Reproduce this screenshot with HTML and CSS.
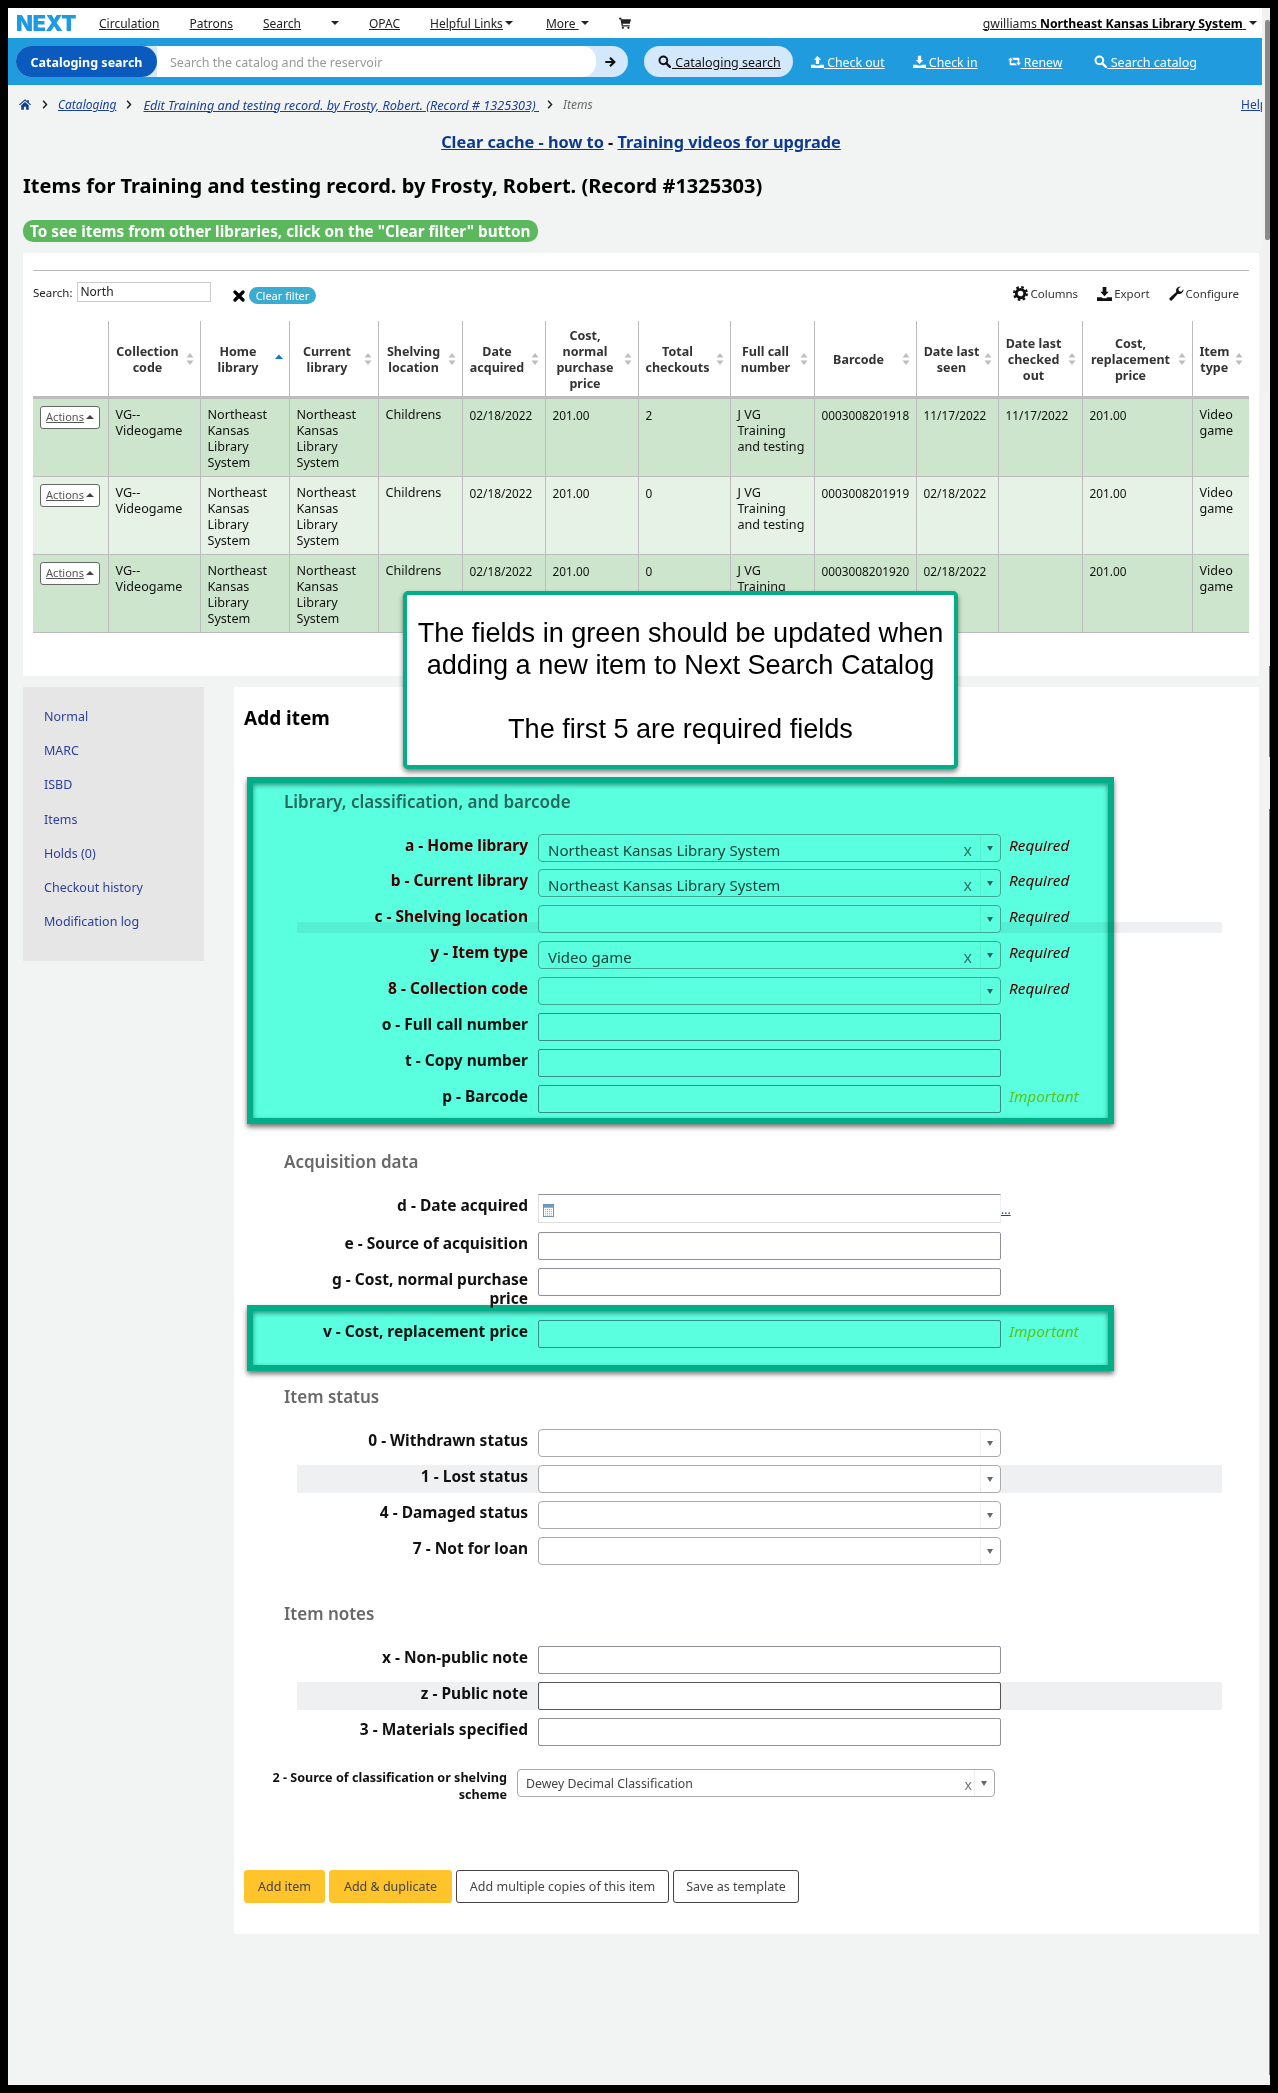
FILE: index.html
```html
<!DOCTYPE html>
<html lang="en">
<head>
<meta charset="utf-8">
<title>Items for Training and testing record</title>
<link rel="stylesheet" href="styles.css">
</head>
<body>
<svg class="defs" aria-hidden="true">
  <symbol id="i-search" viewBox="0 0 16 16"><circle cx="6.6" cy="6.6" r="4.8" fill="none" stroke="currentColor" stroke-width="2.4"/><path d="M10 10l4.6 4.6" stroke="currentColor" stroke-width="2.8" stroke-linecap="round"/></symbol>
  <symbol id="i-up" viewBox="0 0 16 16"><path d="M8 1l4.5 5H10v5H6V6H3.500zM0 12h5v1h6v-1h5v4H0z" fill="currentColor"/></symbol>
  <symbol id="i-down" viewBox="0 0 16 16"><path d="M6 1h4v5h2.500L8 11 3.500 6H6zM0 12h5l1 1h4l1-1h5v4H0z" fill="currentColor"/></symbol>
  <symbol id="i-retweet" viewBox="0 0 16 12"><path d="M3 1l3 3.500H4V8h5l2 2.500H3a1 1 0 0 1-1-1v-5H0zM5 1.500h8a1 1 0 0 1 1 1v5h2L13 11 10 7.500h2V4H7z" fill="currentColor"/></symbol>
  <symbol id="i-home" viewBox="0 0 16 14"><path d="M8 0l3 2.600V1h2v3.300L16 7l-1 1-7-6-7 6-1-1zM3 8l5-4.300L13 8v6H9.500v-4h-3v4H3z" fill="currentColor"/></symbol>
  <symbol id="i-chev" viewBox="0 0 8 12"><path d="M1.500 1L6 6l-4.500 5" fill="none" stroke="currentColor" stroke-width="2"/></symbol>
  <symbol id="i-cart" viewBox="0 0 14 14"><path d="M0 1h2.600l.4 1.500h11L12.600 8H4.300l.3 1.500H12.500V11H3.300L1.600 2.500H0z" fill="currentColor"/><circle cx="4.500" cy="12.600" r="1.300" fill="currentColor"/><circle cx="11" cy="12.600" r="1.300" fill="currentColor"/></symbol>
  <symbol id="i-arrow" viewBox="0 0 14 14"><path d="M1.500 7h9M7 2l5 5-5 5" fill="none" stroke="currentColor" stroke-width="2.600"/></symbol>
  <symbol id="i-times" viewBox="0 0 12 12"><path d="M2 2l8 8M10 2l-8 8" stroke="currentColor" stroke-width="3.200" stroke-linecap="round"/></symbol>
  <symbol id="i-cog" viewBox="0 0 16 16"><circle cx="8" cy="8" r="4.500" fill="none" stroke="currentColor" stroke-width="3"/><circle cx="8" cy="8" r="6.800" fill="none" stroke="currentColor" stroke-width="2.400" stroke-dasharray="2.700 2.640"/></symbol>
  <symbol id="i-wrench" viewBox="0 0 16 16"><path d="M15.500 3.500a4.500 4.500 0 0 1-6 4.700L3.500 15a1.700 1.700 0 0 1-2.500-2.500l6.800-6a4.500 4.500 0 0 1 4.700-6L10 3l.6 2.400L13 6z" fill="currentColor"/></symbol>
  <symbol id="i-cal" viewBox="0 0 12 14"><rect x=".5" y=".5" width="11" height="13" fill="#fff" stroke="#5f8ab5"/><rect x="1" y="1" width="10" height="3" fill="#6f9ac6"/><path d="M2.500 6h7M2.500 8h7M2.500 10h7M2.500 12h7" stroke="#7d8fa3" stroke-dasharray="1 1"/></symbol>
  <symbol id="i-sort" viewBox="0 0 8 12"><path d="M4 0l3.500 4.500h-7zM4 12L.5 7.500h7z" fill="#bdbdbd"/></symbol>
  <symbol id="i-sortup" viewBox="0 0 8 12"><path d="M4 1.500L8 6H0z" fill="#0b78c9"/></symbol>
</svg>

<div class="frame">
  <div class="page">
    <nav class="topnav">
      <span class="logo">NEXT</span>
      <a class="navlink">Circulation</a>
      <a class="navlink">Patrons</a>
      <a class="navlink">Search</a>
      <i class="caret"></i>
      <a class="navlink">OPAC</a>
      <span class="navgroup"><a class="navlink">Helpful Links</a><i class="caret"></i></span>
      <span class="navgroup wide"><a class="navlink">More&nbsp;</a><i class="caret"></i></span>
      <svg class="ico-cart"><use href="#i-cart"/></svg>
      <span class="user"><a class="navlink">gwilliams <b>Northeast Kansas Library System</b>&nbsp;</a><i class="caret"></i></span>
    </nav>

    <div class="searchbar">
      <div class="search">
        <span class="search-tag">Cataloging search</span>
        <span class="search-input">Search the catalog and the reservoir</span>
        <svg class="ico-go"><use href="#i-arrow"/></svg>
      </div>
      <a class="tab tab-on"><svg class="ico-tab"><use href="#i-search"/></svg><span class="tab-u">&nbsp;Cataloging search</span></a>
      <a class="tab tab-out"><svg class="ico-tab"><use href="#i-up"/></svg><span class="tab-u">&nbsp;Check out</span></a>
      <a class="tab tab-in"><svg class="ico-tab"><use href="#i-down"/></svg><span class="tab-u">&nbsp;Check in</span></a>
      <a class="tab tab-renew"><svg class="ico-tab"><use href="#i-retweet"/></svg><span class="tab-u">&nbsp;Renew</span></a>
      <a class="tab tab-last"><svg class="ico-tab"><use href="#i-search"/></svg><span class="tab-u">&nbsp;Search catalog</span></a>
    </div>

    <div class="crumbs">
      <svg class="ico-home"><use href="#i-home"/></svg>
      <svg class="ico-chev"><use href="#i-chev"/></svg>
      <a class="crumb">Cataloging</a>
      <svg class="ico-chev"><use href="#i-chev"/></svg>
      <a class="crumb crumb-long">Edit Training and testing record. by Frosty, Robert. (Record # 1325303)&nbsp;</a>
      <svg class="ico-chev"><use href="#i-chev"/></svg>
      <span class="crumb-last">Items</span>
      <a class="help">Help</a>
    </div>

    <p class="notice"><a>Clear cache - how to</a> - <a>Training videos for upgrade</a></p>
    <h1 class="title">Items for Training and testing record. by Frosty, Robert. (Record #1325303)</h1>
    <div class="badge">To see items from other libraries, click on the "Clear filter" button</div>

    <section class="card">
      <div class="rule"></div>
      <div class="toolbar">
        <label class="filter">Search: <span class="filter-box">North</span></label>
        <svg class="ico-x"><use href="#i-times"/></svg>
        <span class="clear">Clear filter</span>
        <span class="tools">
          <span class="tool"><svg class="ico-tool"><use href="#i-cog"/></svg>Columns</span>
          <span class="tool"><svg class="ico-tool"><use href="#i-down"/></svg>Export</span>
          <span class="tool"><svg class="ico-tool"><use href="#i-wrench"/></svg>Configure</span>
        </span>
      </div>
      <table class="items">
        <colgroup>
          <col class="c1"><col class="c2"><col class="c3"><col class="c3"><col class="c5"><col class="c6"><col class="c7"><col class="c2"><col class="c9"><col class="c10"><col class="c11"><col class="c12"><col class="c13"><col class="c14">
        </colgroup>
        <thead>
          <tr>
            <th></th>
            <th>Collection code<svg class="sort"><use href="#i-sort"/></svg></th>
            <th>Home library<svg class="sort"><use href="#i-sortup"/></svg></th>
            <th>Current library<svg class="sort"><use href="#i-sort"/></svg></th>
            <th>Shelving location<svg class="sort"><use href="#i-sort"/></svg></th>
            <th>Date acquired<svg class="sort"><use href="#i-sort"/></svg></th>
            <th>Cost, normal purchase price<svg class="sort"><use href="#i-sort"/></svg></th>
            <th>Total checkouts<svg class="sort"><use href="#i-sort"/></svg></th>
            <th>Full call number<svg class="sort"><use href="#i-sort"/></svg></th>
            <th>Barcode<svg class="sort"><use href="#i-sort"/></svg></th>
            <th class="th-tight">Date last seen<svg class="sort"><use href="#i-sort"/></svg></th>
            <th>Date last checked out<svg class="sort"><use href="#i-sort"/></svg></th>
            <th>Cost, replacement price<svg class="sort"><use href="#i-sort"/></svg></th>
            <th>Item type<svg class="sort"><use href="#i-sort"/></svg></th>
          </tr>
        </thead>
        <tbody>
          <tr class="odd">
            <td><a class="actions"><span>Actions </span><i class="caret-up"></i></a></td>
            <td>VG-- Videogame</td><td>Northeast Kansas Library System</td><td>Northeast Kansas Library System</td><td>Childrens</td><td class="num">02/18/2022</td><td class="num">201.00</td><td class="num">2</td><td>J VG Training and testing</td><td class="num">0003008201918</td><td class="num">11/17/2022</td><td class="num">11/17/2022</td><td class="num">201.00</td><td>Video game</td>
          </tr>
          <tr class="even">
            <td><a class="actions"><span>Actions </span><i class="caret-up"></i></a></td>
            <td>VG-- Videogame</td><td>Northeast Kansas Library System</td><td>Northeast Kansas Library System</td><td>Childrens</td><td class="num">02/18/2022</td><td class="num">201.00</td><td class="num">0</td><td>J VG Training and testing</td><td class="num">0003008201919</td><td class="num">02/18/2022</td><td></td><td class="num">201.00</td><td>Video game</td>
          </tr>
          <tr class="odd">
            <td><a class="actions"><span>Actions </span><i class="caret-up"></i></a></td>
            <td>VG-- Videogame</td><td>Northeast Kansas Library System</td><td>Northeast Kansas Library System</td><td>Childrens</td><td class="num">02/18/2022</td><td class="num">201.00</td><td class="num">0</td><td>J VG Training and testing</td><td class="num">0003008201920</td><td class="num">02/18/2022</td><td></td><td class="num">201.00</td><td>Video game</td>
          </tr>
        </tbody>
      </table>
    </section>

    <div class="lower">
      <aside class="side">
        <a>Normal</a><a>MARC</a><a>ISBD</a><a>Items</a><a>Holds (0)</a><a>Checkout history</a><a>Modification log</a>
      </aside>

      <main class="form">
        <h2 class="form-title">Add item</h2>

        <section class="fields">
          <h3>Library, classification, and barcode</h3>
          <div class="row row-a"><label class="req">a - Home library</label><div class="sel"><span>Northeast Kansas Library System</span><u>x</u><i></i></div><em class="req">Required</em></div>
          <div class="row"><label class="req">b - Current library</label><div class="sel"><span>Northeast Kansas Library System</span><u>x</u><i></i></div><em class="req">Required</em></div>
          <div class="row row-band-short"><label class="req">c - Shelving location</label><div class="sel"><span></span><i></i></div><em class="req">Required</em></div>
          <div class="row"><label class="req">y - Item type</label><div class="sel"><span>Video game</span><u>x</u><i></i></div><em class="req">Required</em></div>
          <div class="row"><label class="req">8 - Collection code</label><div class="sel"><span></span><i></i></div><em class="req">Required</em></div>
          <div class="row"><label>o - Full call number</label><div class="inp"></div></div>
          <div class="row"><label>t - Copy number</label><div class="inp"></div></div>
          <div class="row"><label>p - Barcode</label><div class="inp"></div><em class="imp">Important</em></div>
        </section>

        <section class="fields">
          <h3>Acquisition data</h3>
          <div class="row row-date"><label>d - Date acquired</label><div class="inp inp-date"><svg class="ico-cal"><use href="#i-cal"/></svg></div><a class="dots">...</a></div>
          <div class="row"><label>e - Source of acquisition</label><div class="inp"></div></div>
          <div class="row row-wrap"><label>g - Cost, normal purchase price</label><div class="inp"></div></div>
          <div class="row"><label>v - Cost, replacement price</label><div class="inp"></div><em class="imp">Important</em></div>
        </section>

        <section class="fields">
          <h3>Item status</h3>
          <div class="row"><label>0 - Withdrawn status</label><div class="sel"><span></span><i></i></div></div>
          <div class="row row-band"><label>1 - Lost status</label><div class="sel"><span></span><i></i></div></div>
          <div class="row"><label>4 - Damaged status</label><div class="sel"><span></span><i></i></div></div>
          <div class="row"><label>7 - Not for loan</label><div class="sel"><span></span><i></i></div></div>
        </section>

        <section class="fields fields-notes">
          <h3>Item notes</h3>
          <div class="row"><label>x - Non-public note</label><div class="inp"></div></div>
          <div class="row row-band"><label>z - Public note</label><div class="inp inp-dark"></div></div>
          <div class="row"><label>3 - Materials specified</label><div class="inp"></div></div>
        </section>

        <div class="scheme">
          <label>2 - Source of classification or shelving scheme</label>
          <div class="sel sel-small"><span>Dewey Decimal Classification</span><u>x</u><i></i></div>
        </div>

        <div class="buttons">
          <a class="btn btn-y b1">Add item</a>
          <a class="btn btn-y b2">Add &amp; duplicate</a>
          <a class="btn b3">Add multiple copies of this item</a>
          <a class="btn b4">Save as template</a>
        </div>

        <div class="hl hl-main"></div>
        <div class="hl hl-cost"></div>
      </main>
    </div>
  </div>

  <div class="callout">The fields in green should be updated when adding a new item to Next Search Catalog<br><br>The first 5 are required fields</div>
  <div class="scrollbar"><div class="thumb"></div></div>
  <div class="edge edge-a"></div>
  <div class="edge edge-b"></div>
</div>
</body>
</html>
```
FILE: styles.css
```css
* { box-sizing: border-box; }
html, body { height: 100%; }
body {
  margin: 0;
  padding: 8px;
  background: #000;
  font-family: "Noto Sans", "Open Sans", sans-serif;
  font-size: 12.5px;
  color: #111;
  overflow: hidden;
}
.defs { position: absolute; width: 0; height: 0; }
a { color: inherit; }

.frame {
  position: relative;
  width: 1262px;
  height: 2077px;
  background: #f2f4f4;
  overflow: hidden;
}
.page { width: 1254px; }

/* top nav */
.topnav {
  height: 30px;
  background: #fff;
  display: flex;
  align-items: center;
  gap: 30px;
  padding: 0 5px 0 8px;
  font-size: 12px;
}
.logo {
  font-family: "Inter", "Noto Sans", sans-serif;
  font-weight: 900;
  font-size: 22px;
  letter-spacing: -.5px;
  color: #1e9be0;
  width: 61px;
  margin-right: -8px;
}
.navlink { text-decoration: underline; color: #222; white-space: nowrap; }
.navlink b { font-weight: 700; color: #000; }
.navgroup { display: flex; align-items: center; gap: 2px; }
.navgroup.wide { margin-left: 3px; }
.caret {
  width: 0; height: 0;
  border-left: 4px solid transparent;
  border-right: 4px solid transparent;
  border-top: 4px solid #222;
  display: block;
}
.ico-cart { width: 12px; height: 12px; color: #222; }
.user { margin-left: auto; display: flex; align-items: center; gap: 3px; font-size: 12.25px; }

/* search bar */
.searchbar {
  width: 1254px;
  height: 47px;
  background: #209bde;
  display: flex;
  align-items: center;
  padding-left: 8px;
  font-size: 12.5px;
}
.search {
  width: 612px;
  height: 31px;
  border-radius: 16px;
  background: #d3e8fb;
  display: flex;
  align-items: center;
  margin-right: 16px;
}
.search-tag {
  width: 141px;
  height: 31px;
  line-height: 33px;
  border-radius: 16px;
  background: #0a5bbd;
  color: #fff;
  font-weight: 700;
  text-align: center;
}
.search-input {
  width: 439px;
  height: 31px;
  line-height: 33px;
  background: #fff;
  color: #999;
  padding-left: 13px;
  border-radius: 0 14px 14px 0;
}
.ico-go { width: 12px; height: 12px; margin-left: 8px; color: #111; }
.tab {
  display: flex;
  align-items: center;
  height: 31px;
  color: #fff;
  margin-right: 29px;
  white-space: nowrap;
  font-size: 12.3px;
}
.tab-u { text-decoration: underline; padding-top: 2px; }
.tab-on {
  width: 149px;
  background: #d3e8fb;
  color: #111;
  border-radius: 16px;
  padding-left: 14px;
  margin-right: 18px;
  font-size: 12.5px;
}
.tab-on .tab-u { margin-left: 1px; }
.tab-out { margin-right: 28px; }
.tab-in { margin-right: 30px; }
.tab-renew { margin-right: 32px; }
.tab-last { font-size: 12.6px; }
.ico-tab { width: 13px; height: 13px; }

/* breadcrumbs */
.crumbs {
  height: 39px;
  display: flex;
  align-items: center;
  padding-left: 11px;
  font-size: 12px;
  font-style: italic;
  position: relative;
}
.ico-home { width: 12px; height: 11px; color: #0f3d8f; margin-right: 11px; }
.ico-chev { width: 6px; height: 9px; color: #222; margin-right: 10px; }
.crumb { color: #1a3f99; text-decoration: underline; white-space: nowrap; margin-right: 10px; }
.crumb-long { font-size: 12.66px; margin-left: 1px; margin-right: 8px; }
.crumb-last { color: #666; }
.help {
  margin-left: auto;
  font-style: normal;
  text-decoration: underline;
  color: #1a3f99;
  width: 21px;
  overflow: hidden;
}

.notice {
  margin: 7px 0 0;
  height: 22px;
  line-height: 22px;
  text-align: center;
  font-size: 16.3px;
  font-weight: 700;
  padding-left: 12px;
}
.notice a { color: #0c3a8f; text-decoration: underline; }
.title {
  margin: 18px 0 0 15px;
  height: 30px;
  line-height: 30px;
  font-size: 20px;
  font-weight: 700;
  color: #000;
}
.badge {
  margin: 19px 0 0 15px;
  width: 515px;
  height: 22px;
  line-height: 22px;
  border-radius: 10px;
  background: #5cb85c;
  color: #fff;
  font-weight: 700;
  font-size: 15.3px;
  padding-left: 7px;
  white-space: nowrap;
}

/* item table card */
.card {
  margin: 11px 3px 0 15px;
  height: 423px;
  background: #fff;
  padding: 17px 10px 0;
}
.rule { height: 1px; background: #bbb; }
.toolbar {
  height: 50px;
  display: flex;
  align-items: center;
  padding-bottom: 5px;
  font-size: 12px;
}
.filter { display: flex; align-items: center; gap: 5px; width: 198px; color: #222; font-size: 11.5px; margin-bottom: 3px; margin-right: 2px; }
.filter-box {
  width: 134px;
  height: 20px;
  line-height: 18px;
  border: 1px solid #ccc;
  padding-left: 2px;
  color: #222;
  font-size: 12px;
}
.ico-x { width: 12px; height: 12px; color: #000; margin-right: 4px; margin-top: 4px; }
.clear {
  height: 17px;
  width: 67px;
  line-height: 17px;
  border-radius: 9px;
  background: #39acd0;
  color: #fff;
  text-align: center;
  font-size: 11px;
  margin-top: 4px;
}
.tools { margin-left: auto; display: flex; gap: 19px; padding-right: 10px; color: #333; font-size: 11.5px; }
.tool { display: flex; align-items: center; gap: 2px; }
.ico-tool { width: 15px; height: 15px; color: #111; }

.items {
  width: 1216px;
  table-layout: fixed;
  border-collapse: collapse;
  font-size: 12.6px;
  line-height: 16px;
}
.c1 { width: 75px; }
.c2 { width: 92px; }
.c3 { width: 89px; }
.c5 { width: 84px; }
.c6 { width: 83px; }
.c7 { width: 93px; }
.c9 { width: 84px; }
.c10 { width: 102px; }
.c11 { width: 82px; }
.c12 { width: 84px; }
.c13 { width: 110px; }
.c14 { width: 57px; }
.items th {
  position: relative;
  height: 76px;
  padding: 4px 20px 0 7px;
  font-weight: 700;
  font-size: 12.5px;
  color: #333;
  text-align: center;
  background: #fff;
  border-left: 1px solid #bcbcbc;
  border-bottom: 3px solid #bcbcbc;
}
.items th.th-tight { padding: 4px 14px 0 3px; }
.items th:first-child { border-left: 0; }
.sort {
  position: absolute;
  right: 6px;
  top: 32px;
  width: 8px;
  height: 12px;
}
.items td {
  height: 78.33px;
  padding: 8px 6px 5px 7px;
  vertical-align: top;
  color: #111;
  border-left: 1px solid #bcbcbc;
  border-bottom: 1px solid #bcbcbc;
}
.items td.num { font-size: 11.8px; }
.items td:first-child { border-left: 0; }
.odd td { background: #cce5cc; }
.even td { background: #e6f2e6; }
.actions {
  display: flex;
  align-items: center;
  justify-content: center;
  gap: 2px;
  width: 60px;
  height: 23px;
  margin-top: -1px;
  background: #fff;
  border: 1px solid #666;
  border-radius: 3px;
  font-size: 11px;
  color: #555;
}
.actions span { text-decoration: underline; }
.caret-up {
  width: 0; height: 0;
  border-left: 4px solid transparent;
  border-right: 4px solid transparent;
  border-bottom: 4px solid #444;
}

/* lower area */
.lower {
  display: flex;
  align-items: flex-start;
  margin: 11px 3px 0 15px;
  gap: 30px;
}
.side {
  width: 181px;
  height: 274px;
  background: #e6e6e6;
  padding: 13px 0 0 21px;
  display: flex;
  flex-direction: column;
  font-size: 12.5px;
  flex: none;
}
.side a { height: 34.2px; line-height: 34.2px; color: #2a3f9c; }

.form {
  position: relative;
  width: 1025px;
  height: 1247px;
  background: #fff;
  padding-top: 19px;
}
.form-title {
  margin: 0 0 0 10px;
  height: 24px;
  line-height: 24px;
  font-size: 19px;
  font-weight: 700;
  color: #000;
}
.fields { margin: 0 0 38px 63px; }
.form-title + .fields { margin-top: 61px; }
.fields-notes { margin-bottom: 23px; }
.fields h3 {
  margin: 0 0 21px -13px;
  height: 22px;
  line-height: 22px;
  font-size: 17px;
  font-weight: 600;
  color: #696969;
}
.row {
  position: relative;
  display: flex;
  width: 925px;
  height: 28px;
  margin-bottom: 8px;
  padding-left: 11px;
}
.row-a { margin-bottom: 7px; }
.row-date { height: 30px; }
.row-wrap { height: 44px; }
.row-band { background: #eff0f1; }
.row-band-short::before {
  content: "";
  position: absolute;
  left: 0;
  right: 0;
  bottom: 0;
  height: 11px;
  background: #eff0f1;
}
.row > * { position: relative; }
.row label {
  width: 220px;
  flex: none;
  text-align: right;
  font-weight: 700;
  font-size: 15.5px;
  line-height: 19px;
  padding-top: 2px;
  color: #111;
}
.row-wrap label { padding-left: 20px; }
.row label.req { color: #c80000; }
.inp {
  width: 463px;
  height: 28px;
  margin-left: 10px;
  flex: none;
  background: #fff;
  border: 1px solid #8f8f9d;
  border-radius: 2px;
}
.inp-dark { border-color: #555; }
.inp-date {
  height: 29px;
  border-color: #8f8f9d #eee #ddd #ddd;
  padding: 9px 0 0 4px;
  border-radius: 0;
}
.ico-cal { width: 11px; height: 13px; display: block; }
.dots { color: #1a3f99; text-decoration: underline; font-size: 12px; line-height: 32px; }
.sel {
  position: relative;
  display: flex;
  width: 463px;
  height: 28px;
  margin-left: 10px;
  flex: none;
  background: #fff;
  border: 1px solid #aaa;
  border-radius: 4px;
  font-size: 15px;
  color: #444;
}
.sel span { padding: 5px 0 0 9px; line-height: 20px; white-space: nowrap; }
.sel u {
  position: absolute;
  right: 28px;
  top: 7px;
  text-decoration: none;
  color: #777;
  font-size: 16px;
  line-height: 16px;
}
.sel i {
  position: absolute;
  right: 0;
  top: 0;
  width: 20px;
  height: 26px;
  border-left: 1px solid #eee;
}
.sel i::after {
  content: "";
  position: absolute;
  left: 6px;
  top: 11px;
  border-left: 3.5px solid transparent;
  border-right: 3.5px solid transparent;
  border-top: 5px solid #666;
}
.row em { font-size: 15.3px; line-height: 19px; padding: 2px 0 0 8px; white-space: nowrap; }
em.req { color: #c80000; }
em.imp { color: #ffc41c; }

.scheme { display: flex; margin-left: 33px; }
.scheme label {
  width: 240px;
  flex: none;
  text-align: right;
  font-weight: 700;
  font-size: 12.6px;
  line-height: 17px;
  color: #111;
}
.sel-small { width: 478px; font-size: 12.3px; }
.sel-small span { padding-top: 4px; padding-left: 8px; }
.sel-small u { right: 22px; font-size: 14px; }
.sel-small i { height: 26px; }

.buttons { display: flex; margin: 67px 0 0 10px; }
.btn {
  height: 33px;
  line-height: 31px;
  text-align: center;
  border: 1px solid #444;
  border-radius: 3px;
  font-size: 12.5px;
  color: #444;
  background: #fff;
  margin-right: 4px;
}
.btn-y { background: #ffc32b; border-color: #ffc32b; }
.b1 { width: 81px; }
.b2 { width: 123px; }
.b3 { width: 213px; }
.b4 { width: 126px; }

/* highlight overlays */
.hl {
  position: absolute;
  left: 13px;
  width: 867px;
  background: #5affe0;
  border: 6px solid #00ae87;
  mix-blend-mode: multiply;
  box-shadow: 0 3px 5px rgba(0, 0, 0, .55), inset 0 2px 5px rgba(0, 0, 0, .45);
}
.hl-main { top: 90px; height: 347px; }
.hl-cost { top: 618px; height: 66px; }

.callout {
  position: absolute;
  left: 395px;
  top: 583px;
  width: 555px;
  height: 178px;
  padding: 22px 4px 0;
  background: #fff;
  border: 4px solid #00ae87;
  border-radius: 5px;
  box-shadow: 0 3px 5px rgba(0, 0, 0, .5);
  font-family: "Liberation Sans", Arial, sans-serif;
  font-size: 27.1px;
  line-height: 32px;
  text-align: center;
  color: #000;
}

.scrollbar {
  position: absolute;
  right: 0;
  top: 0;
  width: 8px;
  height: 384px;
  background: #f1f1f1;
}
.thumb {
  position: absolute;
  left: 3px;
  top: 12px;
  width: 5px;
  height: 220px;
  background: #8a8a8a;
  border-radius: 2px;
}
.edge { position: absolute; right: 0; width: 1px; background: #777; }
.edge-a { top: 658px; height: 91px; }
.edge-b { top: 801px; height: 1266px; }
```
